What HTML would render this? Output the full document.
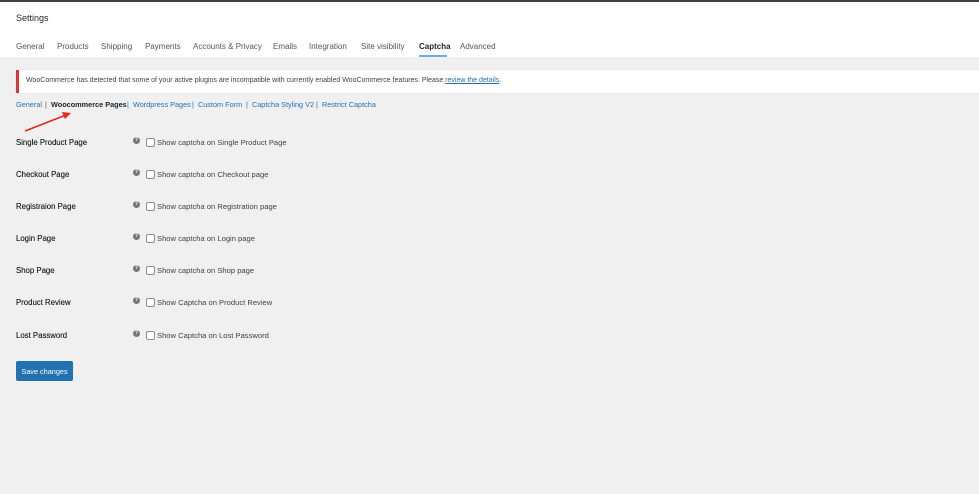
<!DOCTYPE html>
<html><head><style>
*{margin:0;padding:0;box-sizing:border-box}
body{width:979px;height:494px;background:#f0f0f1;font-family:"Liberation Sans",sans-serif;font-size:7.5px;color:#1d2327;position:relative;overflow:hidden}
.a{position:absolute;white-space:nowrap}
.hdr{position:absolute;left:0;top:0;width:979px;height:57px;background:#fff;border-top:2px solid #3c434a}
.tab{color:#50575e;font-size:8px;top:42px}
.link{color:#2271b1}
.sub{top:100px;font-size:7.3px}
.lbl{left:16px;font-size:7.8px;color:#1d2327;text-shadow:0 0 .3px #1d2327}
.q{width:7px;height:7px;border-radius:50%;background:#777;left:133px;color:#fff;font-size:5px;text-align:center;line-height:7px;font-weight:bold}
.cb{width:9px;height:9px;border:1px solid #8c8f94;border-radius:2px;background:#fff;left:146px}
.ct{left:157px;font-size:7.6px;color:#3c434a}
</style></head><body>
<div class="hdr"></div>
<div class="a" style="left:16px;top:13px;font-size:9px;color:#1d2327">Settings</div>
<div class="a tab" style="left:16px">General</div>
<div class="a tab" style="left:57px">Products</div>
<div class="a tab" style="left:101px">Shipping</div>
<div class="a tab" style="left:145px">Payments</div>
<div class="a tab" style="left:193px">Accounts &amp; Privacy</div>
<div class="a tab" style="left:273px">Emails</div>
<div class="a tab" style="left:309px">Integration</div>
<div class="a tab" style="left:361px">Site visibility</div>
<div class="a tab" style="left:419px;color:#1d2327;font-weight:bold">Captcha</div>
<div style="position:absolute;left:419px;top:55px;width:28px;height:2px;background:#72aee6"></div>
<div class="a tab" style="left:460px">Advanced</div>
<div style="position:absolute;left:16px;top:70px;width:963px;height:23px;background:#fff;border-left:3px solid #d63638;box-shadow:0 0 1px #ccc"></div>
<div class="a" style="left:26px;top:77px;font-size:7px;color:#3c434a">WooCommerce has detected that some of your active plugins are incompatible with currently enabled WooCommerce features. Please <span class="link" style="text-decoration:underline">review the details</span>.</div>
<div class="a sub link" style="left:16px">General</div>
<div class="a sub" style="left:45px;color:#50575e">|</div>
<div class="a sub" style="left:51px;font-weight:bold">Woocommerce Pages</div>
<div class="a sub link" style="left:127px">|&nbsp; Wordpress Pages</div>
<div class="a sub link" style="left:192px">|&nbsp; Custom Form</div>
<div class="a sub link" style="left:246px">|&nbsp; Captcha Styling V2</div>
<div class="a sub link" style="left:316px">|&nbsp; Restrict Captcha</div>
<svg style="position:absolute;left:0;top:0" width="100" height="140"><line x1="25" y1="131" x2="66" y2="115" stroke="#e8261c" stroke-width="1.6"/><polygon points="71,113 62,112 65,119" fill="#e8261c"/></svg>
<div class="a lbl" style="top:138px">Single Product Page</div><div class="a q" style="top:137px">?</div><div class="a cb" style="top:138px"></div><div class="a ct" style="top:138px">Show captcha on Single Product Page</div>
<div class="a lbl" style="top:170px">Checkout Page</div><div class="a q" style="top:169px">?</div><div class="a cb" style="top:170px"></div><div class="a ct" style="top:170px">Show captcha on Checkout page</div>
<div class="a lbl" style="top:202px">Registraion Page</div><div class="a q" style="top:201px">?</div><div class="a cb" style="top:202px"></div><div class="a ct" style="top:202px">Show captcha on Registration page</div>
<div class="a lbl" style="top:234px">Login Page</div><div class="a q" style="top:233px">?</div><div class="a cb" style="top:234px"></div><div class="a ct" style="top:234px">Show captcha on Login page</div>
<div class="a lbl" style="top:266px">Shop Page</div><div class="a q" style="top:265px">?</div><div class="a cb" style="top:266px"></div><div class="a ct" style="top:266px">Show captcha on Shop page</div>
<div class="a lbl" style="top:298px">Product Review</div><div class="a q" style="top:297px">?</div><div class="a cb" style="top:298px"></div><div class="a ct" style="top:298px">Show Captcha on Product Review</div>
<div class="a lbl" style="top:331px">Lost Password</div><div class="a q" style="top:330px">?</div><div class="a cb" style="top:331px"></div><div class="a ct" style="top:331px">Show Captcha on Lost Password</div>
<div style="position:absolute;left:16px;top:361px;width:57px;height:20px;background:#2271b1;border-radius:2px;color:#fff;font-size:7.3px;text-align:center;line-height:22px">Save changes</div>
</body></html>
